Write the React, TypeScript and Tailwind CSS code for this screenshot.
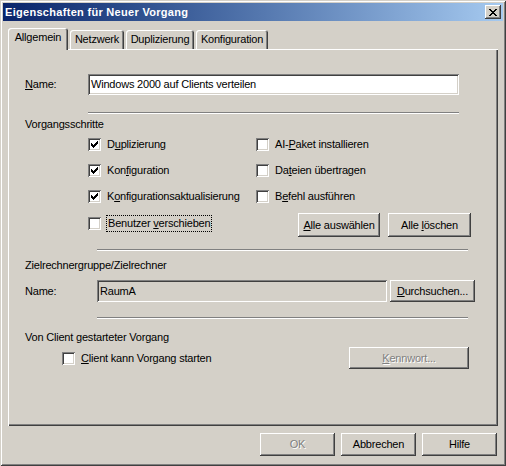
import React from "react";

const raised =
  "shadow-[inset_-1px_-1px_#404040,inset_1px_1px_#ffffff,inset_-2px_-2px_#808080,inset_2px_2px_#d4d0c8]";
const sunken =
  "shadow-[inset_1px_1px_#808080,inset_-1px_-1px_#ffffff,inset_2px_2px_#404040,inset_-2px_-2px_#d4d0c8]";

function CheckMark() {
  // classic 7x7 pixel check
  const px: [number, number][] = [
    [6, 0],
    [5, 1], [6, 1],
    [0, 2], [4, 2], [5, 2], [6, 2],
    [0, 3], [1, 3], [3, 3], [4, 3], [5, 3],
    [0, 4], [1, 4], [2, 4], [3, 4], [4, 4],
    [1, 5], [2, 5], [3, 5],
    [2, 6],
  ];
  return (
    <svg width="7" height="7" viewBox="0 0 7 7" shapeRendering="crispEdges">
      {px.map(([x, y]) => (
        <rect key={`${x}-${y}`} x={x} y={y} width="1" height="1" fill="#000" />
      ))}
    </svg>
  );
}

function Check({
  checked,
  children,
  focus,
}: {
  checked?: boolean;
  children: React.ReactNode;
  focus?: boolean;
}) {
  return (
    <div className="flex items-center h-[13px]">
      <div
        className={`w-[13px] h-[13px] bg-white flex items-center justify-center shrink-0 ${sunken}`}
      >
        {checked && <CheckMark />}
      </div>
      <span
        className={
          focus
            ? "ml-[5px] px-px py-[1px] border border-dotted border-black leading-[13px]"
            : "ml-[6px] leading-[13px]"
        }
      >
        {children}
      </span>
    </div>
  );
}

function Button({
  children,
  className = "",
  disabled,
}: {
  children: React.ReactNode;
  className?: string;
  disabled?: boolean;
}) {
  return (
    <div
      className={`flex items-center justify-center bg-[#d4d0c8] ${raised} ${
        disabled ? "text-[#808080] [text-shadow:1px_1px_0_#ffffff]" : ""
      } ${className}`}
    >
      {children}
    </div>
  );
}

function Separator({ className = "" }: { className?: string }) {
  return (
    <div
      className={`h-[2px] border-t border-t-[#808080] border-b border-b-white ${className}`}
    />
  );
}

function Tab({ label, width, active }: { label: string; width: string; active?: boolean }) {
  return (
    <div
      className={`${width} ${
        active
          ? "h-[22px] -mb-px relative z-10 pt-[3px]"
          : "h-[19px] pt-[3px]"
      } bg-[#d4d0c8] rounded-t-[3px] flex justify-center shadow-[inset_1px_1px_#ffffff,inset_-1px_0_#404040,inset_-2px_0_#808080] leading-[13px]`}
    >
      {label}
    </div>
  );
}

export default function App() {
  return (
    <div className="w-[506px] h-[466px] bg-[#d4d0c8] p-[3px] flex flex-col text-[11px] tracking-[-0.2px] text-black font-['Liberation_Sans',Arial,sans-serif] shadow-[inset_1px_1px_#d4d0c8,inset_-1px_-1px_#404040,inset_2px_2px_#ffffff,inset_-2px_-2px_#808080]">
      {/* title bar */}
      <div className="h-[18px] flex items-center bg-gradient-to-r from-[#0a246a] to-[#a6caf0] pl-[2px] pr-[2px]">
        <span className="font-bold text-white leading-[13px] tracking-[0.3px]">
          Eigenschaften für Neuer Vorgang
        </span>
        <div
          className={`ml-auto w-[16px] h-[14px] bg-[#d4d0c8] flex items-center justify-center ${raised}`}
        >
          <svg width="8" height="7" viewBox="0 0 8 7" shapeRendering="crispEdges">
            <path d="M0 0h2v1h-2zM6 0h2v1h-2zM1 1h2v1h-2zM5 1h2v1h-2zM2 2h4v1h-4zM3 3h2v1h-2zM2 4h4v1h-4zM1 5h2v1h-2zM5 5h2v1h-2zM0 6h2v1h-2zM6 6h2v1h-2z" fill="#000" />
          </svg>
        </div>
      </div>

      <div className="pl-[5px] pr-[5px]">
        {/* tabs */}
        <div className="mt-[7px] h-[21px] flex items-end">
          <Tab label="Allgemein" width="w-[60px]" active />
          <div className="w-[2px]" />
          <Tab label="Netzwerk" width="w-[54px]" />
          <div className="w-[2px]" />
          <Tab label="Duplizierung" width="w-[68px]" />
          <div className="w-[2px]" />
          <Tab label="Konfiguration" width="w-[72px]" />
        </div>

        {/* panel */}
        <div className="h-[377px] w-[490px] bg-[#d4d0c8] shadow-[inset_1px_1px_#ffffff,inset_-1px_-1px_#404040,inset_-2px_-2px_#808080] flex flex-col">
          <div className="mt-[25px] flex items-center h-[21px]">
            <span className="ml-[17px] w-[63px] leading-[13px]">
              <u>N</u>ame:
            </span>
            <div
              className={`w-[371px] h-[21px] bg-white flex items-center pl-[3px] leading-[13px] ${sunken}`}
            >
              Windows 2000 auf Clients verteilen
            </div>
          </div>
          <Separator className="mt-[17px] ml-[80px] w-[371px]" />

          <div className="mt-[4px] ml-[17px] leading-[13px]">Vorgangsschritte</div>

          <div className="mt-[7px] grid grid-cols-[168px_auto] gap-y-[13px] ml-[80px]">
            <Check checked>
              D<u>u</u>plizierung
            </Check>
            <Check>
              AI-<u>P</u>aket installieren
            </Check>
            <Check checked>
              Kon<u>f</u>iguration
            </Check>
            <Check>
              Da<u>t</u>eien übertragen
            </Check>
            <Check checked>
              K<u>o</u>nfigurationsaktualisierung
            </Check>
            <Check>
              B<u>e</u>fehl ausführen
            </Check>
          </div>

          <div className="mt-[10px] flex h-[24px]">
            <div className="ml-[80px] mt-[4px] w-[210px]">
              <Check focus>
                Benutzer <u>v</u>erschieben
              </Check>
            </div>
            <Button className="w-[82px] h-[24px]">
              <span>
                <u>A</u>lle auswählen
              </span>
            </Button>
            <Button className="ml-[8px] w-[83px] h-[24px]">
              <span>
                Alle <u>l</u>öschen
              </span>
            </Button>
          </div>

          <Separator className="mt-[12px] ml-[89px] w-[371px]" />

          <div className="mt-[8px] ml-[17px] leading-[13px]">
            Zielrechnergruppe/Zielrechner
          </div>

          <div className="mt-[8px] flex items-center h-[22px]">
            <span className="ml-[17px] w-[72px] leading-[13px]">Name:</span>
            <div
              className={`w-[290px] h-[22px] bg-[#d4d0c8] flex items-center pl-[3px] leading-[13px] ${sunken}`}
            >
              RaumA
            </div>
            <Button className="ml-[3px] w-[85px] h-[22px]">
              <span>
                <u>D</u>urchsuchen...
              </span>
            </Button>
          </div>

          <Separator className="mt-[15px] ml-[89px] w-[371px]" />

          <div className="mt-[12px] ml-[17px] leading-[13px]">
            Von Client gestarteter Vorgang
          </div>

          <div className="mt-[3px] flex items-center h-[22px]">
            <div className="ml-[54px]">
              <Check>
                <u>C</u>lient kann Vorgang starten
              </Check>
            </div>
            <Button className="ml-auto mr-[29px] w-[120px] h-[22px]" disabled>
              <span>
                <u>K</u>ennwort...
              </span>
            </Button>
          </div>
        </div>

        {/* dialog buttons */}
        <div className="mt-[7px] flex justify-end gap-[6px] pr-[1px]">
          <Button className="w-[75px] h-[23px]" disabled>
            OK
          </Button>
          <Button className="w-[75px] h-[23px]">Abbrechen</Button>
          <Button className="w-[75px] h-[23px]">Hilfe</Button>
        </div>
      </div>
    </div>
  );
}
